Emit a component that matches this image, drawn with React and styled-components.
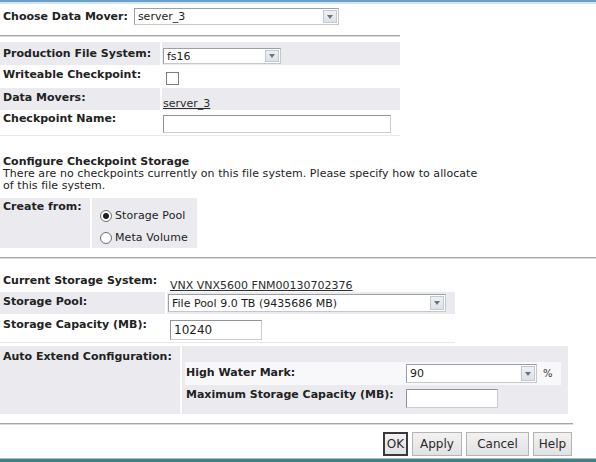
import React from "react";
import styled, { createGlobalStyle } from "styled-components";

const GlobalStyle = createGlobalStyle`
  html, body { margin: 0; padding: 0; background: #fff; }
  body {
    font-family: "DejaVu Sans", Verdana, sans-serif;
    font-size: 11px;
    color: #222;
  }
`;

const Page = styled.div`
  width: 596px;
  height: 462px;
  display: flex;
  flex-direction: column;
  overflow: hidden;
  background: #fff;
`;

const TopEdge = styled.div`
  height: 4px;
  flex: none;
  background: linear-gradient(#6a9fc9 0 2px, #d3e5f1 2px 4px);
`;

const BottomEdge = styled.div`
  margin-top: auto;
  height: 4px;
  flex: none;
  background: linear-gradient(#9cc2c5 0 1px, #437f86 1px 4px);
`;

const Rule = styled.div`
  flex: none;
  width: ${(p) => p.$width || "100%"};
  margin-top: ${(p) => p.$top}px;
  height: 0;
  border-top: 1px solid #a6a6a6;
  border-bottom: 1px solid #dcdcdc;
`;

const MoverRow = styled.div`
  display: flex;
  align-items: center;
  gap: 6px;
  margin-top: 4px;
  padding-left: 3px;
  height: 17px;
`;

const Label = styled.span`
  font-weight: bold;
  white-space: nowrap;
`;

/* ---------- dropdowns ---------- */
const SelectBox = styled.div`
  display: flex;
  align-items: center;
  box-sizing: border-box;
  width: ${(p) => p.$w}px;
  height: ${(p) => p.$h || 17}px;
  border: 1px solid #9aa1a8;
  border-right-color: #c4c8cc;
  border-bottom-color: #c4c8cc;
  background: #fff;
  padding: 0 1px 0 3px;
`;

const SelectText = styled.span`
  flex: 1;
  white-space: nowrap;
  overflow: hidden;
  color: #1c1c1c;
`;

const ArrowBtn = styled.span`
  flex: none;
  width: 14px;
  height: calc(100% - 2px);
  box-sizing: border-box;
  border: 1px solid #c3c9d2;
  background: linear-gradient(#eef1f5, #dde2e9);
  display: flex;
  align-items: center;
  justify-content: center;

  &::after {
    content: "";
    border-left: 3px solid transparent;
    border-right: 3px solid transparent;
    border-top: 4px solid #6b7280;
  }
`;

function Select({ value, w, h }) {
  return (
    <SelectBox $w={w} $h={h}>
      <SelectText>{value}</SelectText>
      <ArrowBtn />
    </SelectBox>
  );
}

const TextInput = styled.div`
  box-sizing: border-box;
  width: ${(p) => p.$w}px;
  height: ${(p) => p.$h || 18}px;
  border: 1px solid #8f959b;
  border-right-color: #c9cdd1;
  border-bottom-color: #c9cdd1;
  background: #fff;
  padding: 0 3px;
  display: flex;
  align-items: center;
  font-size: 12px;
  color: #1c1c1c;
`;

const CheckBox = styled.span`
  display: block;
  width: 13px;
  height: 13px;
  box-sizing: border-box;
  border: 1px solid #7d7d7d;
  background: #fff;
`;

const Link = styled.span`
  text-decoration: underline;
  color: #2b2b2b;
  white-space: nowrap;
`;

/* ---------- form rows ---------- */
const FormBlock = styled.div`
  display: flex;
  flex-direction: column;
  width: ${(p) => p.$w}px;
  margin-top: ${(p) => p.$top || 0}px;
  flex: none;
`;

const FormRow = styled.div`
  display: grid;
  grid-template-columns: ${(p) => p.$cols};
  column-gap: 2px;
  height: ${(p) => p.$h}px;
  border-bottom: ${(p) => (p.$line ? "1px solid #e8e8ec" : "none")};
  box-sizing: border-box;
`;

const LabelCell = styled.div`
  background: ${(p) => (p.$shade ? "#ebebef" : "#fff")};
  font-weight: bold;
  padding: ${(p) => p.$pad || "3px 3px"};
  white-space: nowrap;
  box-sizing: border-box;
`;

const ValueCell = styled.div`
  background: ${(p) => (p.$shade ? "#ebebef" : "#fff")};
  padding: ${(p) => p.$pad || "0"};
  box-sizing: border-box;
  display: flex;
  align-items: flex-start;
  gap: 6px;
`;

const Heading = styled.div`
  margin-top: 19px;
  padding-left: 3px;
  font-weight: bold;
  line-height: 13px;
`;

const Desc = styled.div`
  padding-left: 3px;
  line-height: 12px;
  width: 486px;
  letter-spacing: 0.06px;
`;

/* ---------- radios ---------- */
const RadioList = styled.div`
  display: flex;
  flex-direction: column;
  gap: 7px;
  padding: 10px 0 0 8px;
`;

const RadioItem = styled.div`
  display: flex;
  align-items: center;
  gap: 3px;
  height: 15px;
  letter-spacing: 0.1px;
`;

const RadioDot = styled.span`
  width: 12px;
  height: 12px;
  box-sizing: border-box;
  border-radius: 50%;
  border: 1px solid #6f6f6f;
  background: #fff;
  display: flex;
  align-items: center;
  justify-content: center;

  &::after {
    content: "";
    width: 6px;
    height: 6px;
    border-radius: 50%;
    background: ${(p) => (p.$on ? "#1e1e1e" : "transparent")};
  }
`;

/* ---------- nested auto extend table ---------- */
const NestedTable = styled.div`
  display: flex;
  flex-direction: column;
  width: 376px;
`;

const NestedRow = styled.div`
  display: grid;
  grid-template-columns: 218px 1fr;
  height: ${(p) => p.$h}px;
  background: ${(p) => (p.$light ? "#f8f8fa" : "transparent")};
  align-items: start;
`;

const NestedLabel = styled.div`
  font-weight: bold;
  padding: ${(p) => p.$pt}px 0 0 1px;
  white-space: nowrap;
`;

const NestedValue = styled.div`
  display: flex;
  align-items: center;
  gap: 6px;
  padding-top: ${(p) => p.$pt}px;
  padding-left: 3px;
`;

const Unit = styled.span`
  font-size: 10px;
  color: #333;
`;

/* ---------- buttons ---------- */
const ButtonBar = styled.div`
  display: flex;
  justify-content: flex-end;
  gap: 4px;
  margin-top: 7px;
  padding-right: 24px;
  flex: none;
`;

const Button = styled.button`
  box-sizing: border-box;
  width: ${(p) => p.$w}px;
  height: 24px;
  padding: 0;
  font-family: "DejaVu Sans", Verdana, sans-serif;
  font-size: 12px;
  color: #2a2a2a;
  background: linear-gradient(#f2f2f2, #e2e2e2);
  border: ${(p) => (p.$focus ? "2px solid #3a3a3a" : "1px solid #b4b4b4")};
  border-radius: 0;
`;

export default function App() {
  const colsA = "160px 1fr";
  const colsB = "165px 1fr";
  return (
    <Page>
      <GlobalStyle />
      <TopEdge />

      <MoverRow>
        <Label>Choose Data Mover:</Label>
        <Select value="server_3" w={205} />
      </MoverRow>

      <Rule $top={10} $width="400px" />

      <FormBlock $w={400} $top={5}>
        <FormRow $cols={colsA} $h={23}>
          <LabelCell $shade $pad="5px 3px">Production File System:</LabelCell>
          <ValueCell $shade $pad="6px 0 0 1px">
            <Select value="fs16" w={118} h={16} />
          </ValueCell>
        </FormRow>
        <FormRow $cols={colsA} $h={23}>
          <LabelCell $pad="3px 3px">Writeable Checkpoint:</LabelCell>
          <ValueCell $pad="7px 0 0 4px">
            <CheckBox />
          </ValueCell>
        </FormRow>
        <FormRow $cols={colsA} $h={22}>
          <LabelCell $shade $pad="3px 3px">Data Movers:</LabelCell>
          <ValueCell $shade $pad="9px 0 0 1px">
            <Link>server_3</Link>
          </ValueCell>
        </FormRow>
        <FormRow $cols={colsA} $h={26} $line>
          <LabelCell $pad="2px 3px">Checkpoint Name:</LabelCell>
          <ValueCell $pad="5px 0 0 1px">
            <TextInput $w={228} $h={18} />
          </ValueCell>
        </FormRow>
      </FormBlock>

      <Heading>Configure Checkpoint Storage</Heading>
      <Desc>
        There are no checkpoints currently on this file system. Please specify how to allocate
        of this file system.
      </Desc>

      <FormBlock $w={197} $top={6}>
        <FormRow $cols="90px 1fr" $h={50}>
          <LabelCell $shade $pad="2px 3px">Create from:</LabelCell>
          <ValueCell $shade>
            <RadioList>
              <RadioItem>
                <RadioDot $on />
                <span>Storage Pool</span>
              </RadioItem>
              <RadioItem>
                <RadioDot />
                <span>Meta Volume</span>
              </RadioItem>
            </RadioList>
          </ValueCell>
        </FormRow>
      </FormBlock>

      <Rule $top={9} />

      <FormBlock $w={455} $top={13}>
        <FormRow $cols={colsB} $h={20}>
          <LabelCell $pad="2px 3px">Current Storage System:</LabelCell>
          <ValueCell $pad="7px 0 0 3px">
            <Link>VNX VNX5600 FNM00130702376</Link>
          </ValueCell>
        </FormRow>
        <FormRow $cols={colsB} $h={22}>
          <LabelCell $shade $pad="3px 3px">Storage Pool:</LabelCell>
          <ValueCell $shade $pad="2px 0 0 1px">
            <Select value="File Pool 9.0 TB (9435686 MB)" w={278} h={18} />
          </ValueCell>
        </FormRow>
        <FormRow $cols={colsB} $h={29} $line>
          <LabelCell $pad="4px 3px">Storage Capacity (MB):</LabelCell>
          <ValueCell $pad="6px 0 0 3px">
            <TextInput $w={92} $h={20}>10240</TextInput>
          </ValueCell>
        </FormRow>
      </FormBlock>

      <FormBlock $w={568} $top={3}>
        <FormRow $cols="180px 1fr" $h={68}>
          <LabelCell $shade $pad="4px 3px">Auto Extend Configuration:</LabelCell>
          <ValueCell $shade $pad="16px 0 0 3px">
            <NestedTable>
              <NestedRow $h={23} $light>
                <NestedLabel $pt={4}>High Water Mark:</NestedLabel>
                <NestedValue $pt={2}>
                  <Select value="90" w={131} h={19} />
                  <Unit>%</Unit>
                </NestedValue>
              </NestedRow>
              <NestedRow $h={25}>
                <NestedLabel $pt={3}>Maximum Storage Capacity (MB):</NestedLabel>
                <NestedValue $pt={4}>
                  <TextInput $w={92} $h={19} />
                </NestedValue>
              </NestedRow>
            </NestedTable>
          </ValueCell>
        </FormRow>
      </FormBlock>

      <Rule $top={9} $width="573px" />

      <ButtonBar>
        <Button $w={25} $focus>OK</Button>
        <Button $w={50}>Apply</Button>
        <Button $w={63}>Cancel</Button>
        <Button $w={39}>Help</Button>
      </ButtonBar>

      <BottomEdge />
    </Page>
  );
}
